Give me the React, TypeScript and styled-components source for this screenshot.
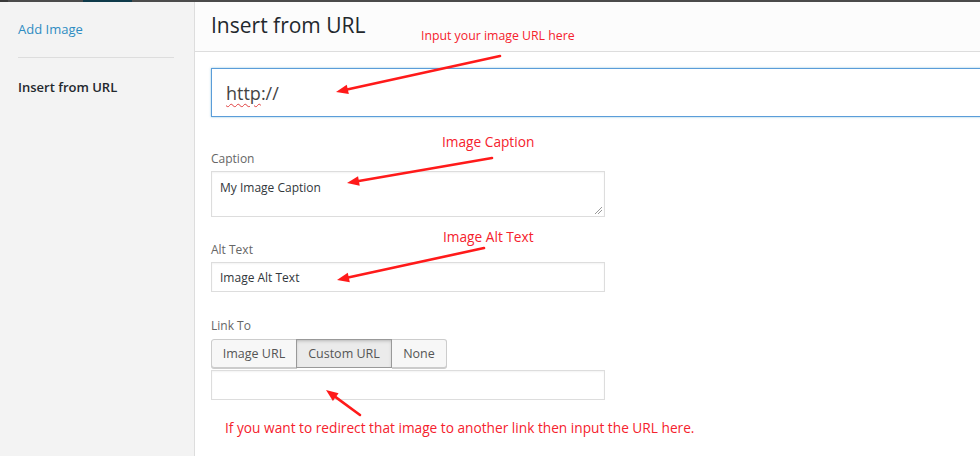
import styled, { createGlobalStyle } from 'styled-components';

const GlobalStyle = createGlobalStyle`
  html, body {
    margin: 0;
    padding: 0;
    background: #ffffff;
  }
  body {
    font-family: 'Open Sans', 'Noto Sans', Arial, sans-serif;
    color: #23282d;
  }
`;

const Page = styled.div`
  position: relative;
  width: 980px;
  height: 456px;
  overflow: hidden;
  display: flex;
  flex-direction: column;
`;

const TopBar = styled.div`
  height: 2px;
  flex: none;
  background: #4b4b4b;
  display: flex;
`;

const TopBarSegment = styled.div<{ $width: number; $color: string }>`
  width: ${(p) => p.$width}px;
  background: ${(p) => p.$color};
`;

const Body = styled.div`
  flex: 1;
  display: flex;
  min-height: 0;
`;

const Sidebar = styled.div`
  width: 195px;
  flex: none;
  background: #f3f3f3;
  border-right: 1px solid #dddddd;
  padding: 18px 20px 0 18px;
  box-sizing: border-box;
  display: flex;
  flex-direction: column;
`;

const SideLink = styled.div<{ $active?: boolean }>`
  font-size: 13px;
  line-height: 18px;
  color: ${(p) => (p.$active ? '#23282d' : '#2e8cc2')};
  font-weight: ${(p) => (p.$active ? 600 : 400)};
`;

const SideDivider = styled.div`
  height: 1px;
  background: #dddddd;
  margin: 19px 0 20px;
`;

const Main = styled.div`
  flex: 1;
  display: flex;
  flex-direction: column;
  min-width: 0;
`;

const Header = styled.div`
  height: 49px;
  flex: none;
  background: #fcfcfc;
  border-bottom: 1px solid #dddddd;
  padding: 0 16px;
  display: flex;
  align-items: center;
`;

const Title = styled.h1`
  margin: 0 0 4px;
  font-size: 21px;
  font-weight: 400;
  color: #23282d;
`;

const Content = styled.div`
  padding: 16px 0 0 16px;
  display: flex;
  flex-direction: column;
`;

const UrlField = styled.div`
  height: 47px;
  margin-right: -30px;
  border: 1px solid #5b9dd9;
  box-shadow: 0 0 2px rgba(30, 140, 190, 0.5);
  display: flex;
  align-items: center;
  padding-left: 14px;
  font-size: 18px;
  color: #444444;
`;

const Squiggle = styled.span`
  text-decoration: underline wavy #e04040;
  text-decoration-thickness: 1px;
  text-underline-offset: 3px;
`;

const Label = styled.div<{ $top: number }>`
  margin-top: ${(p) => p.$top}px;
  font-size: 12px;
  line-height: 16px;
  color: #666666;
`;

const Field = styled.div<{ $height: number; $top?: number; $center?: boolean }>`
  position: relative;
  width: 394px;
  height: ${(p) => p.$height}px;
  margin-top: ${(p) => p.$top ?? 4}px;
  box-sizing: border-box;
  border: 1px solid #dddddd;
  box-shadow: inset 0 1px 2px rgba(0, 0, 0, 0.05);
  background: #ffffff;
  padding: ${(p) => (p.$center ? '0 8px' : '7px 8px')};
  display: flex;
  align-items: ${(p) => (p.$center ? 'center' : 'flex-start')};
  font-size: 12px;
  color: #32373c;
`;

const Grip = styled.svg`
  position: absolute;
  right: 1px;
  bottom: 1px;
`;

const ButtonGroup = styled.div`
  display: flex;
  margin-top: 5px;
`;

const GroupButton = styled.div<{ $width: number; $pressed?: boolean; $pos: 'first' | 'mid' | 'last' }>`
  width: ${(p) => p.$width}px;
  height: 29px;
  box-sizing: border-box;
  display: flex;
  align-items: center;
  justify-content: center;
  font-size: 12.5px;
  color: #555555;
  background: ${(p) => (p.$pressed ? '#ebebeb' : '#f7f7f7')};
  border: 1px solid ${(p) => (p.$pressed ? '#999999' : '#cccccc')};
  border-left-width: ${(p) => (p.$pos === 'first' ? 1 : 0)}px;
  box-shadow: ${(p) => (p.$pressed ? 'inset 0 2px 5px -3px rgba(0,0,0,0.5)' : '0 1px 0 #cccccc')};
  border-radius: ${(p) => (p.$pos === 'first' ? '3px 0 0 3px' : p.$pos === 'last' ? '0 3px 3px 0' : '0')};
  ${(p) => (p.$pressed ? 'border-left: 1px solid #999999; margin-left: -1px;' : '')}
`;

const Notes = styled.div`
  position: absolute;
  inset: 0;
  pointer-events: none;
`;

const Note = styled.div<{ $x: number; $y: number; $size: number }>`
  position: absolute;
  left: ${(p) => p.$x}px;
  top: ${(p) => p.$y}px;
  font-size: ${(p) => p.$size}px;
  line-height: 18px;
  color: #f5222d;
  white-space: nowrap;
`;

const ArrowLayer = styled.svg`
  position: absolute;
  left: 0;
  top: 0;
`;

const arrows = [
  { x1: 500, y1: 56, x2: 336, y2: 92 },
  { x1: 492, y1: 158, x2: 347, y2: 183 },
  { x1: 484, y1: 248, x2: 337, y2: 280 },
  { x1: 360, y1: 415, x2: 326, y2: 390 },
];

const Arrow = ({ x1, y1, x2, y2 }: { x1: number; y1: number; x2: number; y2: number }) => {
  const a = Math.atan2(y2 - y1, x2 - x1);
  const len = 13;
  const spread = 0.38;
  const p1 = [x2 - len * Math.cos(a - spread), y2 - len * Math.sin(a - spread)];
  const p2 = [x2 - len * Math.cos(a + spread), y2 - len * Math.sin(a + spread)];
  const mx = x2 - 9 * Math.cos(a);
  const my = y2 - 9 * Math.sin(a);
  return (
    <g>
      <line x1={x1} y1={y1} x2={mx} y2={my} stroke="#ff1a1a" strokeWidth={2.6} strokeLinecap="round" />
      <polygon points={`${x2},${y2} ${p1[0]},${p1[1]} ${p2[0]},${p2[1]}`} fill="#ff1a1a" />
    </g>
  );
};

export default function App() {
  return (
    <>
      <GlobalStyle />
      <Page>
        <TopBar>
          <TopBarSegment $width={8} $color="#3a3a3a" />
          <TopBarSegment $width={75} $color="#4b4b4b" />
          <TopBarSegment $width={49} $color="#0e3a4a" />
        </TopBar>
        <Body>
          <Sidebar>
            <SideLink>Add Image</SideLink>
            <SideDivider />
            <SideLink $active>Insert from URL</SideLink>
          </Sidebar>
          <Main>
            <Header>
              <Title>Insert from URL</Title>
            </Header>
            <Content>
              <UrlField>
                <span>
                  <Squiggle>http</Squiggle>://
                </span>
              </UrlField>
              <Label $top={34}>Caption</Label>
              <Field $height={46} $top={4}>
                My Image Caption
                <Grip width="10" height="10" viewBox="0 0 10 10">
                  <line x1="2" y1="9" x2="9" y2="2" stroke="#999" strokeWidth="1" />
                  <line x1="5" y1="9" x2="9" y2="5" stroke="#999" strokeWidth="1" />
                </Grip>
              </Field>
              <Label $top={25}>Alt Text</Label>
              <Field $height={30} $center>
                Image Alt Text
              </Field>
              <Label $top={26}>Link To</Label>
              <ButtonGroup>
                <GroupButton $width={86} $pos="first">Image URL</GroupButton>
                <GroupButton $width={96} $pos="mid" $pressed>Custom URL</GroupButton>
                <GroupButton $width={55} $pos="last">None</GroupButton>
              </ButtonGroup>
              <Field $height={30} $top={2} $center />
            </Content>
          </Main>
        </Body>
        <Notes>
          <Note $x={421} $y={27} $size={12.3}>Input your image URL here</Note>
          <Note $x={442} $y={133} $size={13.7}>Image Caption</Note>
          <Note $x={443} $y={228} $size={13.7}>Image Alt Text</Note>
          <Note $x={225} $y={419} $size={13.7}>
            If you want to redirect that image to another link then input the URL here.
          </Note>
          <ArrowLayer width="980" height="456">
            {arrows.map((a, i) => (
              <Arrow key={i} {...a} />
            ))}
          </ArrowLayer>
        </Notes>
      </Page>
    </>
  );
}
